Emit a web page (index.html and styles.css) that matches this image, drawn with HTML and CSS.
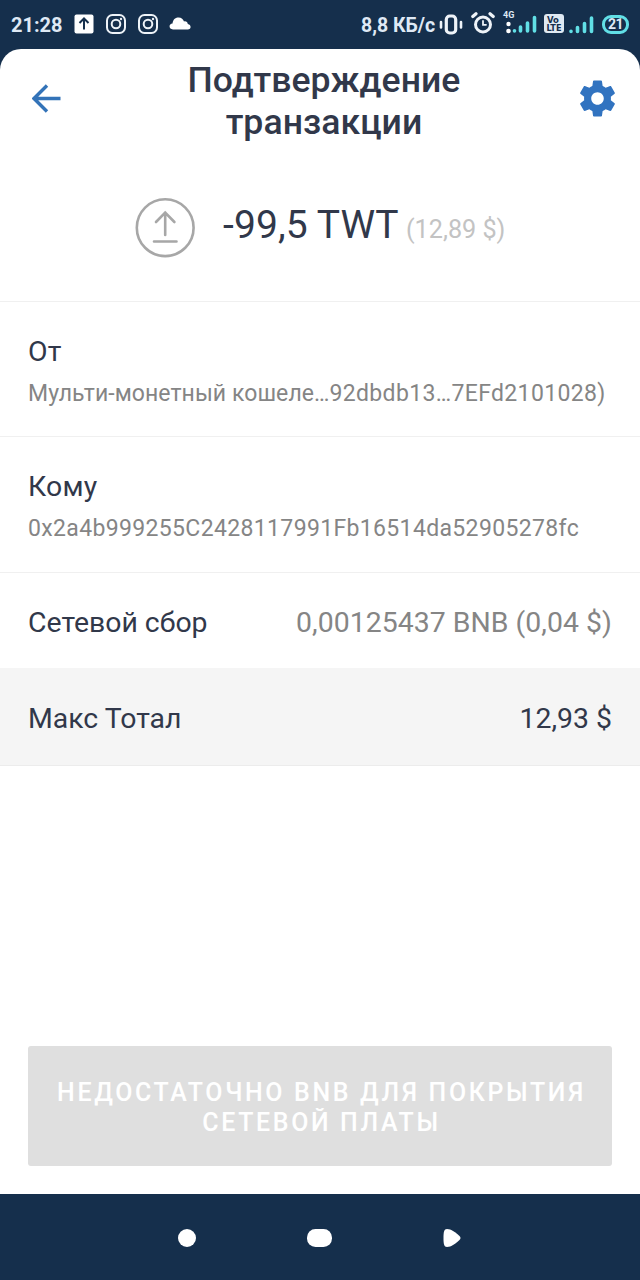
FILE: index.html
```html
<!DOCTYPE html>
<html lang="ru">
<head>
<meta charset="utf-8">
<title>Подтверждение транзакции</title>
<link rel="stylesheet" href="styles.css">
</head>
<body>
<div class="phone">
  <div class="status">
    <div class="status-left">
      <span class="clock">21:28</span>
      <svg class="app-icon" width="20" height="20" viewBox="0 0 20 20"><rect x=".5" y=".5" width="19" height="19" rx="2" fill="#fff"/><path d="M10 15.500V5M5.500 9 10 4.500 14.500 9" fill="none" stroke="#152f4c" stroke-width="2"/></svg>
      <svg class="app-icon" width="20" height="20" viewBox="0 0 20 20" fill="none" stroke="#eef3f8" stroke-width="2"><rect x="1" y="1" width="18" height="18" rx="5.500"/><circle cx="10" cy="10" r="4.300"/><circle cx="15" cy="5" r=".5" stroke-width="1.400"/></svg>
      <svg class="app-icon" width="20" height="20" viewBox="0 0 20 20" fill="none" stroke="#eef3f8" stroke-width="2"><rect x="1" y="1" width="18" height="18" rx="5.500"/><circle cx="10" cy="10" r="4.300"/><circle cx="15" cy="5" r=".5" stroke-width="1.400"/></svg>
      <svg class="cloud" width="22" height="13" viewBox="0 0 22 13"><path d="M4 12.500C-.5 12.500-.5 6.500 3.500 6.500 4 2 7 .5 9.500.5c3 0 4.800 1.700 5.500 4 2-.5 3.500.5 3.800 2.500 3.700.5 3.700 5.500 0 5.500z" fill="#fff"/></svg>
    </div>
    <div class="status-right">
      <span class="speed">8,8 КБ/с</span>
      <svg class="vibrate" width="24" height="21" viewBox="0 0 24 21" fill="none" stroke="#eef3f8" stroke-linecap="round"><rect x="7.300" y="2" width="9.400" height="17" rx="3.500" stroke-width="3.200"/><path d="M2 8v5.500M22 8v5.500" stroke-width="2.600"/></svg>
      <svg class="alarm" width="24" height="22" viewBox="0 0 24 22" fill="none" stroke="#eef3f8" stroke-linecap="round"><circle cx="12" cy="12.500" r="7.500" stroke-width="3"/><path d="M1.800 4.500 5 1.800M19 1.800l3.200 2.700" stroke-width="3.200"/><path d="M12 9v3.800h3" stroke-width="1.800"/></svg>
      <svg class="signal-data" width="34" height="24" viewBox="0 0 34 24"><text x="-1" y="8" class="net">4G</text><g fill="#fff"><circle cx="4.500" cy="14" r="2.200"/><circle cx="4.500" cy="21" r="2.300"/></g><g fill="none" stroke="#61dfe6" stroke-width="3.600" stroke-linecap="round"><path d="M10.500 20.800v.2M16.500 17v4M23.500 13v8M30.500 7.500V21"/></g></svg>
      <svg class="volte" width="20" height="19" viewBox="0 0 20 19"><rect width="20" height="19" rx="3" fill="#dfe9f2"/><text x="3" y="8.500">Vo</text><text x="2.500" y="16.500" textLength="15" lengthAdjust="spacingAndGlyphs">LTE</text></svg>
      <svg class="signal" width="25" height="18" viewBox="0 0 25 18" fill="none" stroke="#61dfe6" stroke-width="3.600" stroke-linecap="round"><path d="M2 15.300v.2M8.500 11.500v4M15.500 7.500v8M22.500 2v13.500"/></svg>
      <span class="battery">21</span>
    </div>
  </div>
  <main class="sheet">
    <header class="header">
      <svg class="back" width="30" height="29" viewBox="0 0 30 29" fill="none" stroke="#3373b8" stroke-width="3.400"><path d="M28.500 14.500H3M15 1.500 2 14.500l13 13"/></svg>
      <h1>Подтверждение<br>транзакции</h1>
      <svg class="gear" width="43" height="43" viewBox="0 0 24 24" fill="#3173c0"><path d="M19.430 12.980c.04-.32.07-.64.07-.98s-.03-.66-.07-.98l2.110-1.650c.19-.15.24-.42.12-.64l-2-3.460c-.12-.22-.39-.3-.61-.22l-2.490 1c-.52-.4-1.080-.73-1.690-.98l-.38-2.650C14.460 2.180 14.250 2 14 2h-4c-.25 0-.46.18-.49.42l-.38 2.650c-.61.25-1.170.59-1.690.98l-2.490-1c-.23-.09-.49 0-.61.22l-2 3.460c-.13.22-.07.49.12.64l2.110 1.650c-.04.32-.07.65-.07.98s.03.66.07.98l-2.110 1.650c-.19.15-.24.42-.12.64l2 3.460c.12.22.39.3.61.22l2.490-1c.52.4 1.080.73 1.690.98l.38 2.650c.03.24.24.42.49.42h4c.25 0 .46-.18.49-.42l.38-2.650c.61-.25 1.170-.59 1.690-.98l2.490 1c.23.09.49 0 .61-.22l2-3.460c.12-.22.07-.49-.12-.64l-2.110-1.650zM12 15.500c-1.930 0-3.500-1.570-3.500-3.500s1.570-3.500 3.500-3.500 3.500 1.570 3.500 3.500-1.570 3.500-3.500 3.500z"/></svg>
    </header>
    <section class="amount">
      <svg width="60" height="60" viewBox="0 0 60 60" fill="none" stroke="#a7a7a7" stroke-width="2.600"><circle cx="30.200" cy="29.700" r="28.400"/><path d="M30.200 37V14.500M21 24 30.200 14.500 39.400 24M19 43.500h22.500" stroke-linecap="round"/></svg>
      <span class="value">-99,5 TWT</span>
      <span class="fiat">(12,89 $)</span>
    </section>
    <section class="party">
      <div class="label">От</div>
      <div class="detail"><span class="wallet">Мульти-монетный кошеле…</span><span class="address-short">92dbdb13…7EFd2101028)</span></div>
    </section>
    <section class="party to-party">
      <div class="label">Кому</div>
      <div class="detail address">0x2a4b999255C2428117991Fb16514da52905278fc</div>
    </section>
    <section class="row fee">
      <span>Сетевой сбор</span>
      <span class="fee-value">0,00125437 BNB (0,04 $)</span>
    </section>
    <section class="row total">
      <span>Макс Тотал</span>
      <span>12,93 $</span>
    </section>
    <button class="submit" disabled><span>НЕДОСТАТОЧНО BNB ДЛЯ ПОКРЫТИЯ</span><span>СЕТЕВОЙ ПЛАТЫ</span></button>
  </main>
  <nav class="navbar">
    <svg width="18" height="18" viewBox="0 0 18 18"><circle cx="9" cy="9" r="9" fill="#fff"/></svg>
    <svg width="25" height="18" viewBox="0 0 25 18"><rect width="25" height="18" rx="8.500" fill="#fff"/></svg>
    <svg width="18" height="18" viewBox="0 0 18 18"><path d="M4 0c4 0 9 3.500 12.500 7q2 2 0 4C13 14.500 8 18 4 18 1 18 .5 15 .5 9S1 0 4 0z" fill="#fff"/></svg>
  </nav>
</div>
</body>
</html>
```
FILE: styles.css
```css
* { box-sizing: border-box; }
body { margin: 0; font-family: Roboto, sans-serif; color: #31384a; }
svg { display: block; flex: none; }
.phone { width: 640px; height: 1280px; display: flex; flex-direction: column; background: #152f4c; overflow: hidden; }
.status { height: 49px; display: flex; justify-content: space-between; padding: 0 9px 0 11px; color: #dfe9f5; white-space: nowrap; }
.status-left, .status-right { display: flex; align-items: center; }
.status-left { gap: 12px; }
.clock { width: 51px; font-size: 20px; font-weight: 700; padding-top: 1px; }
.app-icon { margin-top: -1px; }
.cloud { margin-top: -2px; margin-left: -1px; }
.speed { width: 79px; font-size: 19.500px; font-weight: 700; padding-top: 1px; }
.vibrate { margin-top: -1px; margin-left: -1px; }
.alarm { margin-left: 8px; margin-top: -3px; }
.signal-data { margin-left: 9px; margin-top: -6px; overflow: visible; }
.net { font-size: 9px; font-weight: 700; fill: #dfe9f5; }
.volte { margin-left: 6px; margin-top: -2px; }
.volte text { font-family: "DejaVu Sans", sans-serif; font-size: 8.500px; font-weight: 700; fill: #152f4c; }
.signal { margin-left: 5px; }
.battery { width: 27px; height: 19px; margin-left: 8px; margin-right: 2px; margin-top: -1px; border: 3.500px solid #61dfe6; border-radius: 9px; font-size: 14px; line-height: 13px; font-weight: 700; text-align: center; letter-spacing: -0.500px; }
.sheet { height: 1145px; display: flex; flex-direction: column; background: #fff; border-radius: 21px 21px 0 0; }
.header { height: 100px; padding: 0 21px 0 32px; display: flex; align-items: center; justify-content: space-between; }
.back, .gear { margin-top: -1px; }
.header h1 { margin: 3px 0 0 10px; font-size: 35.600px; font-weight: 500; line-height: 42px; text-align: center; letter-spacing: 0.050px; }
.amount { height: 153px; padding: 49px 0 0 135px; display: flex; align-items: flex-start; border-bottom: 1px solid #f0f0f0; white-space: nowrap; }
.value { width: 183px; margin-left: 28px; padding-top: 4px; font-size: 39px; line-height: 46px; letter-spacing: 0.100px; }
.fiat { padding-top: 16px; font-size: 25.200px; line-height: 32px; color: #c3c3c3; }
.party { height: 135px; padding: 31px 28px 0; border-bottom: 1px solid #f0f0f0; white-space: nowrap; }
.to-party { height: 136px; }
.label { font-size: 28.400px; line-height: 38px; letter-spacing: 0.200px; }
.detail { margin-top: 8px; font-size: 23px; line-height: 30px; color: #858585; }
.wallet { letter-spacing: 0.070px; }
.address-short, .address { letter-spacing: 0.350px; }
.row { display: flex; align-items: center; justify-content: space-between; padding: 4px 28px 0; font-size: 28.400px; white-space: nowrap; }
.fee { height: 95px; }
.fee-value { color: #858585; letter-spacing: 0.040px; }
.total { height: 98px; background: #f5f5f5; border-bottom: 1px solid #ececec; }
.submit { display: flex; flex-direction: column; align-items: center; justify-content: center; height: 120px; margin: auto 28px 28px; padding: 3px 0 0; border: 0; border-radius: 3px; background: #dfdfdf; color: #fff; font-family: Roboto, sans-serif; font-size: 24.900px; font-weight: 500; line-height: 29.500px; letter-spacing: 2.670px; white-space: nowrap; }
.submit span { margin-right: -3px; }
.navbar { height: 86px; padding-right: 2px; padding-top: 1px; display: flex; align-items: center; justify-content: center; gap: 111px; }
```
